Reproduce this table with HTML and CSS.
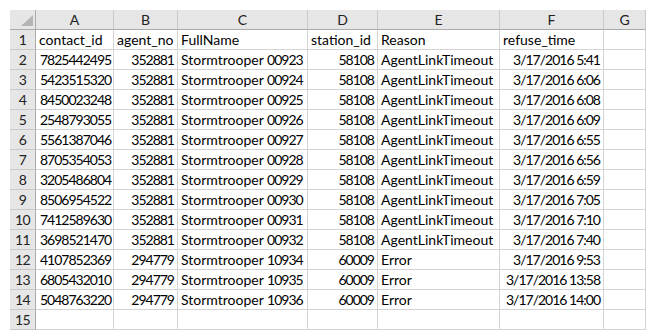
FILE: index.html
```html
<!DOCTYPE html>
<html>
<head>
<meta charset="utf-8">
<link rel="stylesheet" href="styles.css">
</head>
<body>
<div class="sheet">
  <div class="hd corner"><span class="tri"></span></div>
  <div class="hd col">A</div><div class="hd col">B</div><div class="hd col">C</div><div class="hd col">D</div><div class="hd col">E</div><div class="hd col">F</div><div class="hd col">G</div>

  <div class="hd row">1</div><div class="c">contact_id</div><div class="c">agent_no</div><div class="c">FullName</div><div class="c">station_id</div><div class="c">Reason</div><div class="c">refuse_time</div><div class="c"></div>

  <div class="hd row">2</div><div class="c n">7825442495</div><div class="c n r">352881</div><div class="c">Stormtrooper <span class="n">00923</span></div><div class="c n r">58108</div><div class="c">AgentLinkTimeout</div><div class="c n r">3/17/2016 5:41</div><div class="c"></div>
  <div class="hd row">3</div><div class="c n">5423515320</div><div class="c n r">352881</div><div class="c">Stormtrooper <span class="n">00924</span></div><div class="c n r">58108</div><div class="c">AgentLinkTimeout</div><div class="c n r">3/17/2016 6:06</div><div class="c"></div>
  <div class="hd row">4</div><div class="c n">8450023248</div><div class="c n r">352881</div><div class="c">Stormtrooper <span class="n">00925</span></div><div class="c n r">58108</div><div class="c">AgentLinkTimeout</div><div class="c n r">3/17/2016 6:08</div><div class="c"></div>
  <div class="hd row">5</div><div class="c n">2548793055</div><div class="c n r">352881</div><div class="c">Stormtrooper <span class="n">00926</span></div><div class="c n r">58108</div><div class="c">AgentLinkTimeout</div><div class="c n r">3/17/2016 6:09</div><div class="c"></div>
  <div class="hd row">6</div><div class="c n">5561387046</div><div class="c n r">352881</div><div class="c">Stormtrooper <span class="n">00927</span></div><div class="c n r">58108</div><div class="c">AgentLinkTimeout</div><div class="c n r">3/17/2016 6:55</div><div class="c"></div>
  <div class="hd row">7</div><div class="c n">8705354053</div><div class="c n r">352881</div><div class="c">Stormtrooper <span class="n">00928</span></div><div class="c n r">58108</div><div class="c">AgentLinkTimeout</div><div class="c n r">3/17/2016 6:56</div><div class="c"></div>
  <div class="hd row">8</div><div class="c n">3205486804</div><div class="c n r">352881</div><div class="c">Stormtrooper <span class="n">00929</span></div><div class="c n r">58108</div><div class="c">AgentLinkTimeout</div><div class="c n r">3/17/2016 6:59</div><div class="c"></div>
  <div class="hd row">9</div><div class="c n">8506954522</div><div class="c n r">352881</div><div class="c">Stormtrooper <span class="n">00930</span></div><div class="c n r">58108</div><div class="c">AgentLinkTimeout</div><div class="c n r">3/17/2016 7:05</div><div class="c"></div>
  <div class="hd row">10</div><div class="c n">7412589630</div><div class="c n r">352881</div><div class="c">Stormtrooper <span class="n">00931</span></div><div class="c n r">58108</div><div class="c">AgentLinkTimeout</div><div class="c n r">3/17/2016 7:10</div><div class="c"></div>
  <div class="hd row">11</div><div class="c n">3698521470</div><div class="c n r">352881</div><div class="c">Stormtrooper <span class="n">00932</span></div><div class="c n r">58108</div><div class="c">AgentLinkTimeout</div><div class="c n r">3/17/2016 7:40</div><div class="c"></div>
  <div class="hd row">12</div><div class="c n">4107852369</div><div class="c n r">294779</div><div class="c">Stormtrooper <span class="n">10934</span></div><div class="c n r">60009</div><div class="c">Error</div><div class="c n r">3/17/2016 9:53</div><div class="c"></div>
  <div class="hd row">13</div><div class="c n">6805432010</div><div class="c n r">294779</div><div class="c">Stormtrooper <span class="n">10935</span></div><div class="c n r">60009</div><div class="c">Error</div><div class="c n r">3/17/2016 13:58</div><div class="c"></div>
  <div class="hd row">14</div><div class="c n">5048763220</div><div class="c n r">294779</div><div class="c">Stormtrooper <span class="n">10936</span></div><div class="c n r">60009</div><div class="c">Error</div><div class="c n r">3/17/2016 14:00</div><div class="c"></div>
  <div class="hd row">15</div><div class="c"></div><div class="c"></div><div class="c"></div><div class="c"></div><div class="c"></div><div class="c"></div><div class="c"></div>
</div>
</body>
</html>
```
FILE: styles.css
```css
html, body {
  margin: 0;
  padding: 0;
  background: #ffffff;
}
body {
  padding: 10px 0 0 10px;
  font-family: Lato, "Liberation Sans", sans-serif;
  font-size: 14px;
  color: #000;
}
.sheet {
  display: grid;
  grid-template-columns: 26px 78px 64px 130px 70px 122px 104px 42px;
  grid-auto-rows: 20px;
}
.c, .hd {
  box-sizing: border-box;
  border-right: 1px solid #d4d4d4;
  border-bottom: 1px solid #d4d4d4;
  line-height: 20px;
  white-space: nowrap;
  overflow: hidden;
  padding: 0 3px;
}
.c.r {
  text-align: right;
  padding-right: 3px;
}
.n {
  letter-spacing: -1px;
}
.c.n:not(.r) {
  padding-left: 4px;
}
.hd {
  background: #e6e6e6;
  color: #222;
  text-align: center;
  border-right-color: #c2c2c2;
  border-bottom-color: #c2c2c2;
  padding: 0;
}
.hd.col {
  border-right-color: #c9c9c9;
  border-bottom-color: #ababab;
}
.hd.row {
  border-right-color: #ababab;
  border-bottom-color: #c9c9c9;
  letter-spacing: -0.5px;
}
.corner {
  position: relative;
  border-right-color: #ababab;
  border-bottom-color: #ababab;
}
.tri {
  position: absolute;
  right: 2px;
  bottom: 3px;
  width: 0;
  height: 0;
  border-left: 12px solid transparent;
  border-bottom: 11px solid #b5b5b5;
}
```
